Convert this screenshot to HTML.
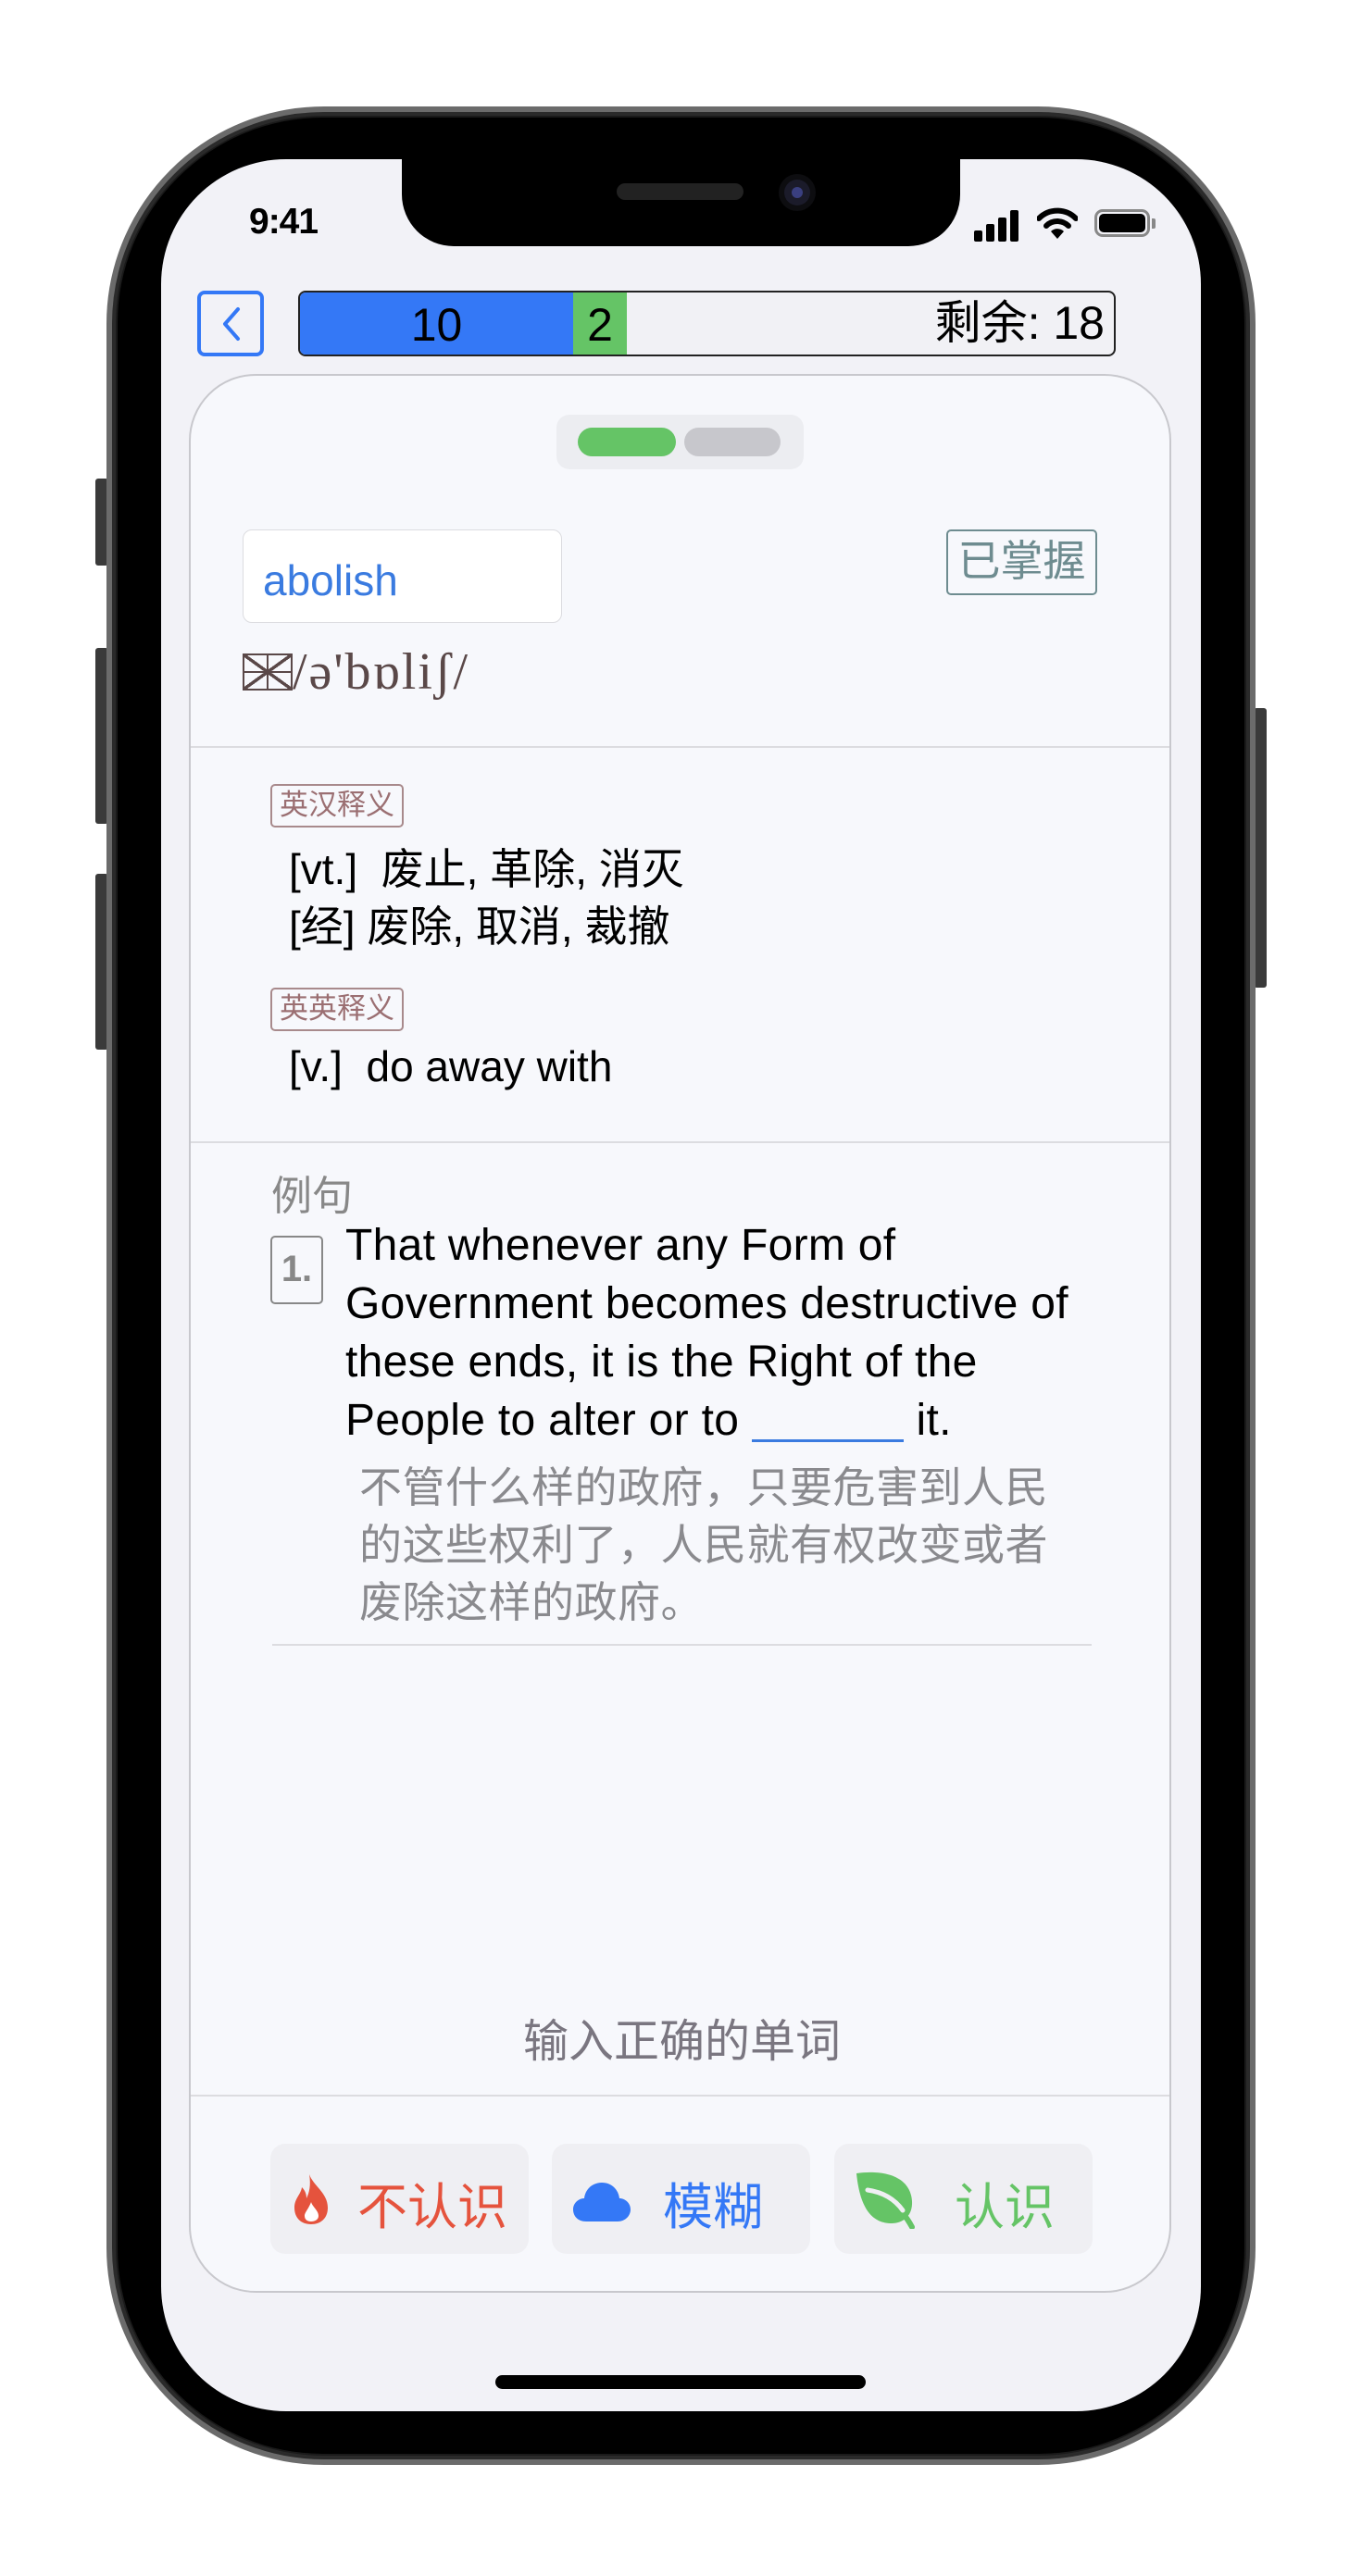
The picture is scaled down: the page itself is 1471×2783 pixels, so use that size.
<!DOCTYPE html>
<html><head><meta charset="utf-8"><style>
*{margin:0;padding:0;box-sizing:border-box}
body{width:1471px;height:2783px;background:#fff;position:relative;overflow:hidden;font-family:"Liberation Sans","Noto Sans CJK SC",sans-serif}
.a{position:absolute}
.cj{font-family:"Liberation Sans","Noto Sans CJK SC",sans-serif;white-space:nowrap}
</style></head><body>
<div class="a" style="left:103px;top:517px;width:14px;height:94px;background:#3a3a3a;border-radius:3px"></div>
<div class="a" style="left:103px;top:700px;width:14px;height:190px;background:#3a3a3a;border-radius:3px"></div>
<div class="a" style="left:103px;top:944px;width:14px;height:190px;background:#3a3a3a;border-radius:3px"></div>
<div class="a" style="left:1354px;top:765px;width:14px;height:302px;background:#3a3a3a;border-radius:3px"></div>
<div class="a" style="left:115px;top:115px;width:1241px;height:2548px;border-radius:235px;background:#1a1a1a;border:6px solid #6b6b6b;box-shadow:inset 0 0 0 4px #2a2a2a"></div>
<div class="a" style="left:127px;top:127px;width:1217px;height:2524px;border-radius:222px;background:#000"></div>
<div class="a" style="left:174px;top:172px;width:1123px;height:2433px;border-radius:135px;background:#f2f2f7;overflow:hidden">
  <div class="a" style="left:260px;top:-10px;width:603px;height:104px;background:#000;border-radius:0 0 56px 56px"></div>
  <div class="a" style="left:492px;top:26px;width:137px;height:18px;background:#222;border-radius:9px"></div>
  <div class="a" style="left:673px;top:22px;width:28px;height:28px;background:#1b1b2a;border-radius:50%;box-shadow:0 0 0 6px #0d0d10"></div>
  <div class="a" style="left:681px;top:30px;width:12px;height:12px;background:#3a3f80;border-radius:50%"></div>
  <div class="a" style="left:95px;top:46px;font-size:39px;font-weight:700;color:#000;letter-spacing:-1px">9:41</div>
  <div class="a" style="left:878px;top:55px;width:50px;height:34px">
    <div class="a" style="left:0;top:22px;width:9px;height:12px;background:#000;border-radius:2px"></div>
    <div class="a" style="left:13px;top:15px;width:9px;height:19px;background:#000;border-radius:2px"></div>
    <div class="a" style="left:26px;top:8px;width:9px;height:26px;background:#000;border-radius:2px"></div>
    <div class="a" style="left:39px;top:0;width:9px;height:34px;background:#000;border-radius:2px"></div>
  </div>
  <svg class="a" style="left:946px;top:52px" width="44" height="36" viewBox="0 0 44 36"><path d="M2 12 A28 28 0 0 1 42 12" stroke="#000" stroke-width="6" fill="none" stroke-linecap="round"/><path d="M10 20 A17 17 0 0 1 34 20" stroke="#000" stroke-width="6" fill="none" stroke-linecap="round"/><path d="M15 26 L22 34 L29 26 A10 10 0 0 0 15 26Z" fill="#000"/></svg>
  <div class="a" style="left:1008px;top:54px;width:60px;height:30px;border:3px solid #888;border-radius:9px"></div>
  <div class="a" style="left:1013px;top:59px;width:50px;height:20px;background:#000;border-radius:5px"></div>
  <div class="a" style="left:1070px;top:64px;width:4px;height:11px;background:#888;border-radius:0 2px 2px 0"></div>
  <div class="a" style="left:39px;top:142px;width:72px;height:71px;border:4px solid #3478f6;border-radius:8px"></div>
  <svg class="a" style="left:39px;top:142px" width="72" height="71"><path d="M44 20 L30 36 L44 52" stroke="#3478f6" stroke-width="4" fill="none" stroke-linecap="round" stroke-linejoin="round"/></svg>
  <div class="a" style="left:148px;top:142px;width:883px;height:71px;border:2px solid #222;border-radius:8px;background:#f1f1f5;overflow:hidden">
    <div class="a" style="left:0;top:0;width:295px;height:71px;background:#3478f6"></div>
    <div class="a" style="left:295px;top:0;width:58px;height:71px;background:#65c466"></div>
    <div class="a" style="left:0;top:0;width:295px;text-align:center;font-size:50px;line-height:70px;color:#000">10</div>
    <div class="a" style="left:295px;top:0;width:58px;text-align:center;font-size:50px;line-height:70px;color:#000">2</div>
    <div class="a cj" style="right:10px;top:0;font-size:50px;line-height:66px;color:#000">剩余: 18</div>
  </div>
  <div class="a" style="left:30px;top:232px;width:1061px;height:2073px;border:2.5px solid #c8c8cd;border-radius:72px;background:#f7f8fc;overflow:hidden">
    <div class="a" style="left:395px;top:42px;width:267px;height:59px;background:#ecedf1;border-radius:14px"></div>
    <div class="a" style="left:418px;top:56px;width:106px;height:31px;background:#65c466;border-radius:16px"></div>
    <div class="a" style="left:533px;top:56px;width:104px;height:31px;background:#c7c7cc;border-radius:16px"></div>
    <div class="a" style="left:56px;top:166px;width:345px;height:101px;background:#fff;border:1.5px solid #dcdce0;border-radius:10px"></div>
    <div class="a" style="left:78px;top:194px;font-size:46px;color:#3a7be0">abolish</div>
    <div class="a cj" style="left:816px;top:166px;width:163px;height:71px;border:2.5px solid #6e8c90;border-radius:5px;font-size:46px;color:#6e8c90;text-align:center;line-height:64px">已掌握</div>
    <div class="a" style="left:56px;top:288px;font-family:'Liberation Serif',serif;font-size:56px;color:#5a4848;white-space:nowrap;letter-spacing:2px"><span style="display:inline-block;width:54px;height:40px;border:2.5px solid #5a4848;vertical-align:-2px;background:linear-gradient(to bottom right,transparent 47%,#5a4848 47%,#5a4848 53%,transparent 53%),linear-gradient(to top right,transparent 47%,#5a4848 47%,#5a4848 53%,transparent 53%),linear-gradient(#5a4848,#5a4848) center/100% 2px no-repeat,linear-gradient(#5a4848,#5a4848) center/2px 100% no-repeat"></span>/ə'bɒliʃ/</div>
    <div class="a" style="left:0;top:400px;width:1061px;height:2px;background:#dcdce0"></div>
    <div class="a cj" style="left:86px;top:441px;width:144px;height:47px;border:2px solid #a88a8c;border-radius:5px;font-size:31px;color:#9b6f72;text-align:center;line-height:42px">英汉释义</div>
    <div class="a cj" style="left:106px;top:497px;font-size:46px;color:#000">[vt.]&nbsp; 废止, 革除, 消灭</div>
    <div class="a cj" style="left:106px;top:559px;font-size:46px;color:#000">[经] 废除, 取消, 裁撤</div>
    <div class="a cj" style="left:86px;top:661px;width:144px;height:47px;border:2px solid #a88a8c;border-radius:5px;font-size:31px;color:#9b6f72;text-align:center;line-height:42px">英英释义</div>
    <div class="a cj" style="left:106px;top:719px;font-size:46px;color:#000">[v.]&nbsp; do away with</div>
    <div class="a" style="left:0;top:827px;width:1061px;height:2px;background:#dcdce0"></div>
    <div class="a cj" style="left:87px;top:850px;font-size:44px;color:#888">例句</div>
    <div class="a" style="left:86px;top:929px;width:57px;height:74px;border:2.5px solid #888;border-radius:5px;font-size:40px;font-weight:700;color:#888;text-align:center;line-height:68px">1.</div>
    <div class="a cj" style="left:167px;top:908px;font-size:48px;color:#000;line-height:63px;letter-spacing:0.3px">That whenever any Form of<br>Government becomes destructive of<br>these ends, it is the Right of the<br>People to alter or to <span style="display:inline-block;width:164px;border-bottom:3px solid #3a7be0;height:44px;vertical-align:-8px"></span> it.</div>
    <div class="a cj" style="left:182px;top:1170px;font-size:46px;color:#8a8a8e;line-height:62px;letter-spacing:0.5px">不管什么样的政府，只要危害到人民<br>的这些权利了，人民就有权改变或者<br>废除这样的政府。</div>
    <div class="a" style="left:88px;top:1370px;width:885px;height:2px;background:#dcdce0"></div>
    <div class="a cj" style="left:0;top:1760px;width:1061px;text-align:center;font-size:49px;color:#7a7680">输入正确的单词</div>
    <div class="a" style="left:0;top:1857px;width:1061px;height:2px;background:#dcdce0"></div>
    <div class="a" style="left:86px;top:1910px;width:279px;height:119px;background:#efeff3;border-radius:16px"></div>
    <div class="a" style="left:390px;top:1910px;width:279px;height:119px;background:#efeff3;border-radius:16px"></div>
    <div class="a" style="left:695px;top:1910px;width:279px;height:119px;background:#efeff3;border-radius:16px"></div>
    <svg class="a" style="left:108px;top:1941px" width="44" height="58" viewBox="0 0 44 58"><path d="M20 2 C24 14 40 22 40 38 C40 50 32 56 22 56 C11 56 4 49 4 38 C4 28 11 24 12 16 C16 20 17 24 17 28 C20 22 22 14 20 2Z" fill="#e5533d"/><path d="M22 32 C24 38 30 41 30 47 C30 51 26 53 22 53 C18 53 15 51 15 47 C15 43 19 40 22 32Z" fill="#fff"/></svg>
    <div class="a cj" style="left:180px;top:1934px;font-size:54px;color:#e5533d">不认识</div>
    <svg class="a" style="left:413px;top:1950px" width="62" height="44" viewBox="0 0 62 44"><path d="M14 44 C5 44 0 38 0 31 C0 24 6 19 12 19 C13 9 21 2 31 2 C42 2 49 10 50 19 C56 19 62 24 62 31 C62 38 56 44 48 44Z" fill="#3478f6"/></svg>
    <div class="a cj" style="left:510px;top:1934px;font-size:54px;color:#3478f6">模糊</div>
    <svg class="a" style="left:717px;top:1938px" width="70" height="64" viewBox="0 0 70 64"><path d="M2 4 C30 0 60 6 62 34 C63 50 52 58 40 58 C20 58 6 44 2 4Z" fill="#65c466"/><path d="M12 22 C30 28 48 36 62 62" stroke="#65c466" stroke-width="6" fill="none" stroke-linecap="round"/><path d="M14 22 C28 24 42 30 52 44" stroke="#efeff3" stroke-width="5" fill="none" stroke-linecap="round"/></svg>
    <div class="a cj" style="left:825px;top:1934px;font-size:54px;color:#65c466">认识</div>
  </div>
  <div class="a" style="left:361px;top:2394px;width:400px;height:15px;background:#000;border-radius:8px"></div>
</div>
</body></html>
